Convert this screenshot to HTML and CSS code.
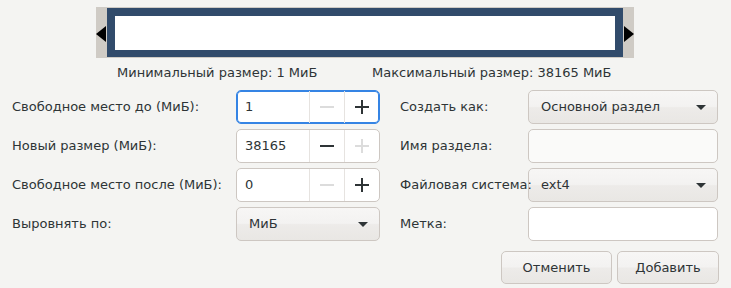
FILE: index.html
```html
<!DOCTYPE html>
<html lang="ru">
<head>
    <meta charset="UTF-8">
    <meta name="viewport" content="width=device-width, initial-scale=1.0">
    <title>Новый раздел</title>
    <link rel="stylesheet" href="styles.css">
</head>
<body>
    <div class="slider">
        <span class="arrow arrow-left"></span>
        <div class="part"></div>
        <span class="arrow arrow-right"></span>
    </div>

    <div class="limits">
        <span class="limit-min">Минимальный размер: 1 МиБ</span>
        <span>Максимальный размер: 38165 МиБ</span>
    </div>

    <div class="form">
        <label class="lbl">Свободное место до (МиБ):</label>
        <div class="spin focused">
            <span class="spin-value">1</span>
            <span class="spin-btn off"><svg viewBox="0 0 14 14"><path d="M0 7h14"/></svg></span>
            <span class="spin-btn"><svg viewBox="0 0 14 14"><path d="M0 7h14M7 0v14"/></svg></span>
        </div>
        <label class="lbl lbl-r">Создать как:</label>
        <div class="combo">Основной раздел<span class="caret"></span></div>

        <label class="lbl">Новый размер (МиБ):</label>
        <div class="spin">
            <span class="spin-value">38165</span>
            <span class="spin-btn"><svg viewBox="0 0 14 14"><path d="M0 7h14"/></svg></span>
            <span class="spin-btn off"><svg viewBox="0 0 14 14"><path d="M0 7h14M7 0v14"/></svg></span>
        </div>
        <label class="lbl lbl-r">Имя раздела:</label>
        <div class="entry insensitive"></div>

        <label class="lbl">Свободное место после (МиБ):</label>
        <div class="spin">
            <span class="spin-value">0</span>
            <span class="spin-btn off"><svg viewBox="0 0 14 14"><path d="M0 7h14"/></svg></span>
            <span class="spin-btn"><svg viewBox="0 0 14 14"><path d="M0 7h14M7 0v14"/></svg></span>
        </div>
        <label class="lbl lbl-r">Файловая система:</label>
        <div class="combo">ext4<span class="caret"></span></div>

        <label class="lbl">Выровнять по:</label>
        <div class="combo">МиБ<span class="caret"></span></div>
        <label class="lbl lbl-r">Метка:</label>
        <div class="entry"></div>
    </div>

    <div class="actions">
        <button class="btn btn-cancel">Отменить</button>
        <button class="btn btn-add">Добавить</button>
    </div>
</body>
</html>
```

FILE: styles.css
```css
* { box-sizing: border-box; }

body {
    margin: 0;
    font: 13px/16px "DejaVu Sans", sans-serif;
    color: #2e3436;
    background: #f4f4f2;
}

/* partition slider */

.slider {
    display: flex;
    align-items: center;
    width: 538px;
    height: 51px;
    margin: 7px 0 0 96px;
    background: #cfcbc5;
}

.arrow {
    width: 0;
    height: 0;
    border-top: 8px solid transparent;
    border-bottom: 8px solid transparent;
    margin-top: 2px;
}
.arrow-left {
    border-right: 10px solid #000;
    margin-right: 1px;
}
.arrow-right {
    border-left: 10px solid #000;
    margin-left: 1px;
}

.part {
    width: 516px;
    height: 49px;
    margin-top: -1px;
    background: #fff;
    border: 8px solid #314b6b;
    border-bottom-width: 7px;
}

.limits {
    display: flex;
    margin: 7px 0 0 117px;
}
.limit-min {
    width: 255px;
}

/* form grid */

.form {
    display: grid;
    grid-template-columns: 224px 144px 148px 190px;
    grid-auto-rows: 34px;
    row-gap: 5px;
    margin: 9px 0 0 12px;
}

.lbl {
    display: flex;
    align-items: center;
    white-space: nowrap;
    position: relative;
    z-index: 1;
}
.lbl-r {
    padding-left: 20px;
}

.spin {
    display: flex;
    background: #fff;
    border: 1px solid #cdc7c2;
    border-radius: 5px;
}
.spin.focused {
    border-color: #3584e4;
    box-shadow: inset 0 0 0 1px #3584e4;
}
.spin-value {
    flex: 1;
    display: flex;
    align-items: center;
    padding-left: 8px;
}
.spin-btn {
    width: 35px;
    display: flex;
    align-items: center;
    justify-content: center;
    border-left: 1px solid #e6e3e0;
}
.spin-btn svg {
    width: 14px;
    height: 14px;
    fill: none;
    stroke: #2e3436;
    stroke-width: 2;
}
.spin-btn.off svg {
    stroke: #dcdcdc;
}

.combo {
    display: flex;
    align-items: center;
    justify-content: space-between;
    padding: 0 11px 0 12px;
    border: 1px solid #cdc7c2;
    border-radius: 5px;
    background: linear-gradient(#f7f6f5 0%, #f3f2f1 48%, #edebe9 52%, #e9e7e4 100%);
}
.caret {
    width: 0;
    height: 0;
    border-left: 5.5px solid transparent;
    border-right: 5.5px solid transparent;
    border-top: 5px solid #2e3436;
}

.entry {
    background: #fff;
    border: 1px solid #cdc7c2;
    border-radius: 5px;
}
.entry.insensitive {
    background: #fafaf9;
}

/* buttons */

.actions {
    display: flex;
    justify-content: flex-end;
    gap: 5px;
    margin: 10px 12px 0 0;
}

.btn {
    height: 33px;
    font: inherit;
    color: #2e3436;
    border: 1px solid #cdc7c2;
    border-radius: 5px;
    background: linear-gradient(#f7f6f5 0%, #f3f2f1 48%, #edebe9 52%, #e9e7e4 100%);
}
.btn-cancel { width: 111px; }
.btn-add { width: 102px; }
```
